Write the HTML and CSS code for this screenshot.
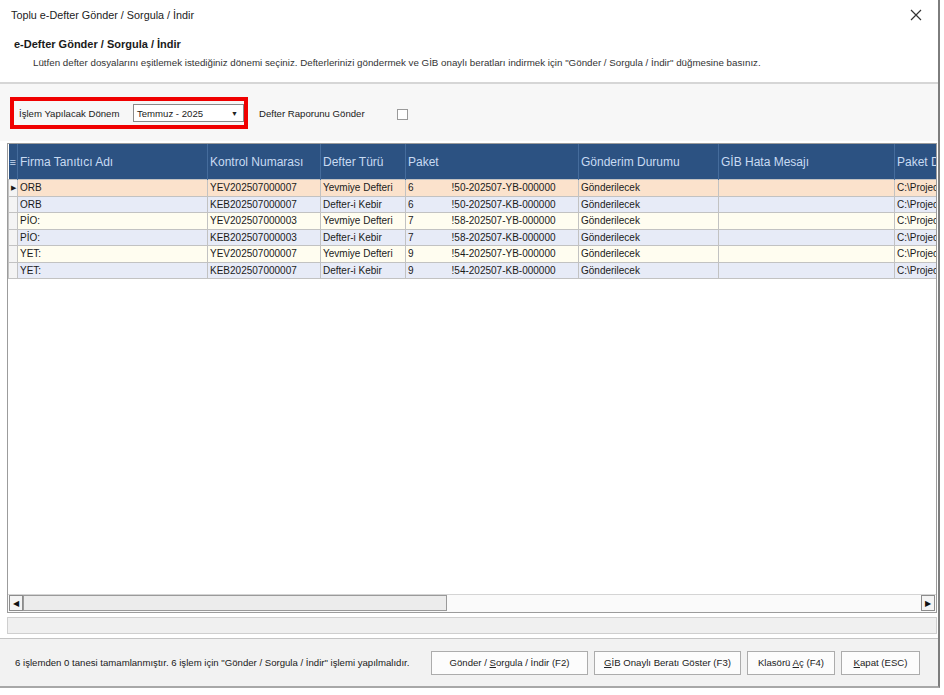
FILE: index.html
```html
<!DOCTYPE html>
<html lang="tr">
<head>
    <meta charset="UTF-8">
    <title>Toplu e-Defter Gönder / Sorgula / İndir</title>
    <link rel="stylesheet" href="styles.css">
</head>
<body>
    <div class="window">
        <div class="titlebar">
            <span>Toplu e-Defter Gönder / Sorgula / İndir</span>
            <svg class="close" width="12" height="12" viewBox="0 0 12 12"><path d="M1 1L11 11M11 1L1 11" stroke="#333" stroke-width="1.2" fill="none"/></svg>
        </div>
        <div class="intro">
            <h1>e-Defter Gönder / Sorgula / İndir</h1>
            <p>Lütfen defter dosyalarını eşitlemek istediğiniz dönemi seçiniz. Defterlerinizi göndermek ve GİB onaylı beratları indirmek için "Gönder / Sorgula / İndir" düğmesine basınız.</p>
        </div>
        <div class="toolbar">
            <div class="period-box">
                <label>İşlem Yapılacak Dönem</label>
                <div class="combo"><span>Temmuz - 2025</span><span class="arrow">&#9660;</span></div>
            </div>
            <label class="report">Defter Raporunu Gönder</label>
            <span class="checkbox"></span>
        </div>
        <div class="grid">
            <div class="grid-body">
                <table>
                    <colgroup>
                        <col style="width:9px"><col style="width:190px"><col style="width:113px"><col style="width:85px">
                        <col style="width:173px"><col style="width:140px"><col style="width:176px"><col style="width:150px">
                    </colgroup>
                    <thead>
                        <tr>
                            <th class="ind">&#8801;</th><th>Firma Tanıtıcı Adı</th><th>Kontrol Numarası</th><th>Defter Türü</th>
                            <th>Paket</th><th>Gönderim Durumu</th><th>GİB Hata Mesajı</th><th>Paket D</th>
                        </tr>
                    </thead>
                    <tbody>
                        <tr class="current">
                            <td class="ind">&#9654;</td><td>ORB</td><td>YEV202507000007</td><td>Yevmiye Defteri</td>
                            <td>6<span class="pk">!50-202507-YB-000000</span></td><td>Gönderilecek</td><td></td><td>C:\Projec</td>
                        </tr>
                        <tr class="even">
                            <td class="ind"></td><td>ORB</td><td>KEB202507000007</td><td>Defter-i Kebir</td>
                            <td>6<span class="pk">!50-202507-KB-000000</span></td><td>Gönderilecek</td><td></td><td>C:\Projec</td>
                        </tr>
                        <tr class="odd">
                            <td class="ind"></td><td>PİO:</td><td>YEV202507000003</td><td>Yevmiye Defteri</td>
                            <td>7<span class="pk">!58-202507-YB-000000</span></td><td>Gönderilecek</td><td></td><td>C:\Projec</td>
                        </tr>
                        <tr class="even">
                            <td class="ind"></td><td>PİO:</td><td>KEB202507000003</td><td>Defter-i Kebir</td>
                            <td>7<span class="pk">!58-202507-KB-000000</span></td><td>Gönderilecek</td><td></td><td>C:\Projec</td>
                        </tr>
                        <tr class="odd">
                            <td class="ind"></td><td>YET:</td><td>YEV202507000007</td><td>Yevmiye Defteri</td>
                            <td>9<span class="pk">!54-202507-YB-000000</span></td><td>Gönderilecek</td><td></td><td>C:\Projec</td>
                        </tr>
                        <tr class="even">
                            <td class="ind"></td><td>YET:</td><td>KEB202507000007</td><td>Defter-i Kebir</td>
                            <td>9<span class="pk">!54-202507-KB-000000</span></td><td>Gönderilecek</td><td></td><td>C:\Projec</td>
                        </tr>
                    </tbody>
                </table>
            </div>
            <div class="hscroll">
                <span class="sbtn">&#9664;</span>
                <span class="thumb"></span>
                <span class="track"></span>
                <span class="sbtn">&#9654;</span>
            </div>
        </div>
        <div class="progress"></div>
        <div class="footer">
            <span class="status">6 işlemden 0 tanesi tamamlanmıştır. 6 işlem için "Gönder / Sorgula / İndir" işlemi yapılmalıdır.</span>
            <div class="buttons">
                <button class="b-send">Gönder / <u>S</u>orgula / İndir (F2)</button>
                <button class="b-berat"><u>G</u>İB Onaylı Beratı Göster (F3)</button>
                <button class="b-folder">Klasörü <u>A</u>ç (F4)</button>
                <button class="b-close"><u>K</u>apat (ESC)</button>
            </div>
        </div>
    </div>
</body>
</html>
```

FILE: styles.css
```css
body {
    margin: 0;
    font-family: "Liberation Sans", Arial, sans-serif;
    font-size: 11px;
    color: #1a1a1a;
    background: #fff;
}
.window {
    width: 938px;
    height: 686px;
    border-right: 2px solid #7d7d7d;
    border-bottom: 2px solid #a8a8a8;
    display: flex;
    flex-direction: column;
    background: #fff;
}
.titlebar {
    height: 30px;
    display: flex;
    align-items: center;
    justify-content: space-between;
    padding: 0 16px 0 11px;
    font-size: 10.8px;
    color: #222;
}
.intro {
    height: 54px;
    box-sizing: border-box;
    padding: 8px 0 0 14px;
    border-bottom: 2px solid #d6d6d6;
}
.intro h1 {
    margin: 0;
    font-size: 11px;
    line-height: 13px;
    font-weight: bold;
}
.intro p {
    margin: 5px 0 0 19px;
    font-size: 9.75px;
    line-height: 13px;
    color: #333;
}
.toolbar {
    height: 57px;
    box-sizing: border-box;
    padding: 13px 0 0 10px;
    background: #f7f7f7;
    display: flex;
    align-items: flex-start;
}
.period-box {
    width: 238px;
    height: 32px;
    box-sizing: border-box;
    border: 4px solid #f00000;
    display: flex;
    align-items: center;
    padding-left: 5px;
    font-size: 9.6px;
}
.period-box label {
    width: 115px;
}
.combo {
    width: 112px;
    height: 18px;
    box-sizing: border-box;
    border: 1px solid #8a8a8a;
    background: #fff;
    display: flex;
    align-items: center;
    justify-content: space-between;
    padding: 0 5px 0 3px;
}
.combo .arrow {
    font-size: 7px;
    color: #222;
}
.report {
    margin: 11px 0 0 11px;
    font-size: 9.6px;
    width: 138px;
}
.checkbox {
    margin-top: 12px;
    width: 9px;
    height: 9px;
    border: 1px solid #9a9a9a;
    background: #fff;
}
.grid {
    margin: 2px 0 0 7px;
    width: 930px;
    height: 470px;
    box-sizing: border-box;
    border: 1px solid #9c9c9c;
    display: flex;
    flex-direction: column;
    background: #fff;
}
.grid-body {
    flex: 1;
    overflow: hidden;
}
table {
    border-collapse: collapse;
    table-layout: fixed;
    width: 1036px;
}
th {
    height: 35px;
    padding: 0 0 0 2px;
    background: #2c5282;
    color: #c9dbf2;
    font-weight: normal;
    font-size: 12px;
    text-align: left;
    border-right: 1px solid #456c9c;
    white-space: nowrap;
    overflow: hidden;
}
th.ind {
    padding: 0;
    font-size: 11px;
    text-align: center;
}
td {
    height: 15.5px;
    padding: 0 0 0 2px;
    font-size: 10px;
    border: 1px solid #c2c2c2;
    white-space: nowrap;
    overflow: hidden;
}
td.ind {
    padding: 0;
    font-size: 7px;
    text-align: center;
}
tr.current td {
    background: #fbe2cc;
}
tr.even td {
    background: #e7ebf7;
}
tr.odd td {
    background: #fffdf0;
}
tr td.ind {
    background: #f4f4f4;
}
.pk {
    margin-left: 38px;
}
.hscroll {
    height: 16px;
    display: flex;
    align-items: stretch;
    padding: 0 1px 1px 1px;
    background: #fafafa;
    border-top: 1px solid #d4d4d4;
}
.sbtn {
    width: 12px;
    border: 1px solid #8c8c8c;
    background: #f4f4f4;
    font-size: 8px;
    display: flex;
    align-items: center;
    justify-content: center;
    color: #111;
}
.thumb {
    width: 422px;
    border: 1px solid #9a9a9a;
    background: #ececec;
}
.track {
    flex: 1;
}
.progress {
    margin: 4px 0 0 7px;
    width: 930px;
    height: 17px;
    box-sizing: border-box;
    border: 1px solid #cfcfcf;
    background: #f0f0f0;
}
.footer {
    flex: 1;
    margin-top: 4px;
    border-top: 1px solid #c4c4c4;
    background: #f2f2f2;
    display: flex;
    align-items: center;
    justify-content: space-between;
    padding: 0 18px 0 15px;
}
.status {
    font-size: 9.6px;
}
.buttons {
    display: flex;
    gap: 6px;
}
button {
    height: 24px;
    padding: 0;
    font-family: "Liberation Sans", Arial, sans-serif;
    font-size: 9.6px;
    color: #222;
    background: #fcfcfc;
    border: 1px solid #acacac;
    border-radius: 0;
}
.b-send { width: 157px; }
.b-berat { width: 147px; }
.b-folder { width: 88px; }
.b-close { width: 79px; }
```
